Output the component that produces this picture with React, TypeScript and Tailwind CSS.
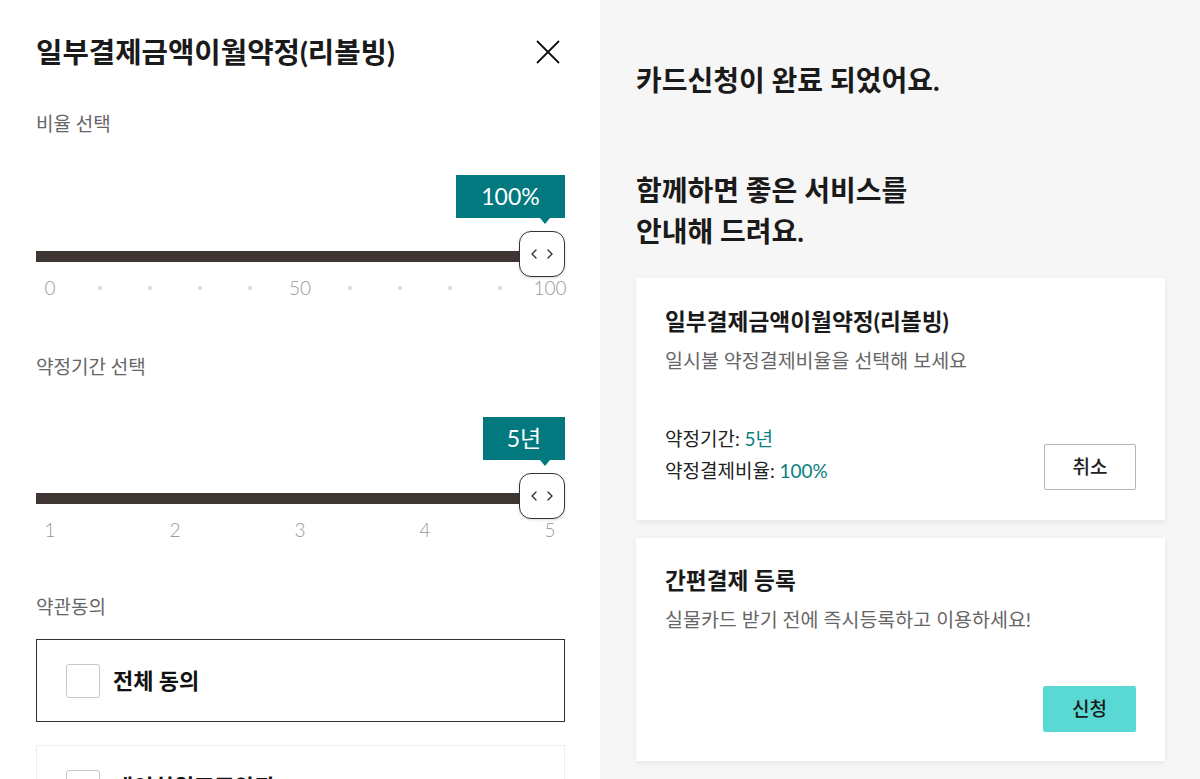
import React from "react";

const Thumb = () => (
  <div className="absolute right-0 top-0 flex h-[46px] w-[46px] items-center justify-center rounded-[12px] border-[1.5px] border-[#333] bg-white shadow-[0_1px_3px_rgba(0,0,0,0.15)]">
    <svg width="24" height="12" viewBox="0 0 24 12" fill="none" stroke="#333" strokeWidth="1.4" strokeLinecap="round" strokeLinejoin="round">
      <path d="M6 2 L2 6 L6 10" />
      <path d="M18 2 L22 6 L18 10" />
    </svg>
  </div>
);

type Label = { t: string; dot?: boolean };

const Slider = ({ value, width, labels }: { value: string; width: string; labels: Label[] }) => (
  <div className="flex flex-col">
    <div className="flex justify-end">
      <div className={`relative flex h-[43px] ${width} items-center justify-center bg-[#02797f] text-[23px] text-white`}>
        {value}
        <div className="absolute bottom-[-6px] right-[15px] h-0 w-0 border-x-[5px] border-t-[6px] border-x-transparent border-t-[#02797f]" />
      </div>
    </div>
    <div className="relative mt-[13px] h-[46px]">
      <div className="absolute left-0 right-[23px] top-[20px] h-[11px] bg-[#3e3632]" />
      <Thumb />
    </div>
    <div className="ml-[14px] mr-[15px] flex h-[22px] items-center justify-between">
      {labels.map((l, i) => (
        <div key={i} className="flex w-0 items-center justify-center whitespace-nowrap">
          {l.dot ? (
            <span className="block h-[4px] w-[4px] shrink-0 rounded-full bg-[#d8d8d8]" />
          ) : (
            <span className="text-[19px] font-light leading-[22px] text-[#999]">{l.t}</span>
          )}
        </div>
      ))}
    </div>
  </div>
);

export default function App() {
  const labels1: Label[] = [
    { t: "0" },
    { t: "", dot: true },
    { t: "", dot: true },
    { t: "", dot: true },
    { t: "", dot: true },
    { t: "50" },
    { t: "", dot: true },
    { t: "", dot: true },
    { t: "", dot: true },
    { t: "", dot: true },
    { t: "100" },
  ];
  const labels2: Label[] = [{ t: "1" }, { t: "2" }, { t: "3" }, { t: "4" }, { t: "5" }];

  return (
    <div className="flex h-[779px] w-[1200px] overflow-hidden font-['Lato','Noto_Sans_CJK_KR',sans-serif] text-[#222]">
      {/* Left panel */}
      <div className="flex w-[600px] shrink-0 flex-col bg-white pl-9 pr-[35px] pt-[34px]">
        <div className="flex h-[36px] items-center justify-between">
          <h1 className="text-[28.7px] font-bold leading-[36px] text-[#1a1a1a]">일부결제금액이월약정(리볼빙)</h1>
          <svg className="mr-[5px]" width="24" height="24" viewBox="0 0 24 24" fill="none" stroke="#111" strokeWidth="1.8">
            <path d="M1 1 L23 23 M23 1 L1 23" />
          </svg>
        </div>

        <div className="mt-[41px] text-[19px] leading-[26px] text-[#666]">비율 선택</div>
        <div className="mt-[38px]">
          <Slider value="100%" width="w-[109px]" labels={labels1} />
        </div>

        <div className="mt-[55px] text-[19px] leading-[26px] text-[#666]">약정기간 선택</div>
        <div className="mt-[37px]">
          <Slider value="5년" width="w-[82px]" labels={labels2} />
        </div>

        <div className="mt-[53px] text-[19px] leading-[26px] text-[#666]">약관동의</div>
        <div className="mt-[19px] flex h-[83px] shrink-0 items-center border-[1.5px] border-[#333] pl-[29px]">
          <div className="h-[34px] w-[34px] rounded-[3px] border border-[#c8c8c8] bg-white" />
          <span className="ml-[13px] text-[22px] font-bold text-[#111]">전체 동의</span>
        </div>
        <div className="mt-[23px] flex h-[83px] shrink-0 items-center justify-between border border-[#eeeeee] pl-[29px] pr-[28px]">
          <div className="flex items-center">
            <div className="h-[34px] w-[34px] rounded-[3px] border border-[#c8c8c8] bg-white" />
            <span className="ml-[13px] text-[22px] font-bold text-[#111]">개인회원표준약관</span>
          </div>
          <span className="text-[16px] text-[#888]">보기</span>
        </div>
      </div>

      {/* Right panel */}
      <div className="flex flex-1 flex-col bg-[#f6f6f6] pl-9 pr-[35px] pt-[62px]">
        <h2 className="text-[28px] font-bold leading-[36px] text-[#1a1a1a]">카드신청이 완료 되었어요.</h2>
        <h2 className="mt-[72px] text-[28px] font-bold leading-[41px] text-[#1a1a1a]">
          함께하면 좋은 서비스를
          <br />
          안내해 드려요.
        </h2>

        <div className="mt-[26px] flex flex-col bg-white px-[29px] pb-[30px] pt-[29px] shadow-[0_2px_6px_rgba(0,0,0,0.07)]">
          <div className="text-[22.7px] font-bold leading-[30px] text-[#1a1a1a]">일부결제금액이월약정(리볼빙)</div>
          <div className="mt-[11px] text-[19.5px] leading-[26px] text-[#666]">일시불 약정결제비율을 선택해 보세요</div>
          <div className="mt-[49px] flex items-end justify-between">
            <div className="mb-[3px] flex flex-col text-[19px] leading-[32px] text-[#222]">
              <div>
                약정기간: <span className="text-[#0a7f80]">5년</span>
              </div>
              <div>
                약정결제비율: <span className="text-[#0a7f80]">100%</span>
              </div>
            </div>
            <button className="flex h-[46px] w-[92px] items-center justify-center rounded-[2px] border border-[#b5b5b5] bg-white text-[19px] font-medium text-[#222]">
              취소
            </button>
          </div>
        </div>

        <div className="mt-[18px] flex flex-col bg-white px-[29px] pb-[29px] pt-[28px] shadow-[0_2px_6px_rgba(0,0,0,0.07)]">
          <div className="text-[22.7px] font-bold leading-[30px] text-[#1a1a1a]">간편결제 등록</div>
          <div className="mt-[11px] text-[19.5px] leading-[26px] text-[#666]">실물카드 받기 전에 즉시등록하고 이용하세요!</div>
          <div className="mt-[53px] flex justify-end">
            <button className="flex h-[46px] w-[93px] items-center justify-center rounded-[2px] bg-[#5ad8d4] text-[19px] font-medium text-[#1a1a1a]">
              신청
            </button>
          </div>
        </div>
      </div>
    </div>
  );
}
